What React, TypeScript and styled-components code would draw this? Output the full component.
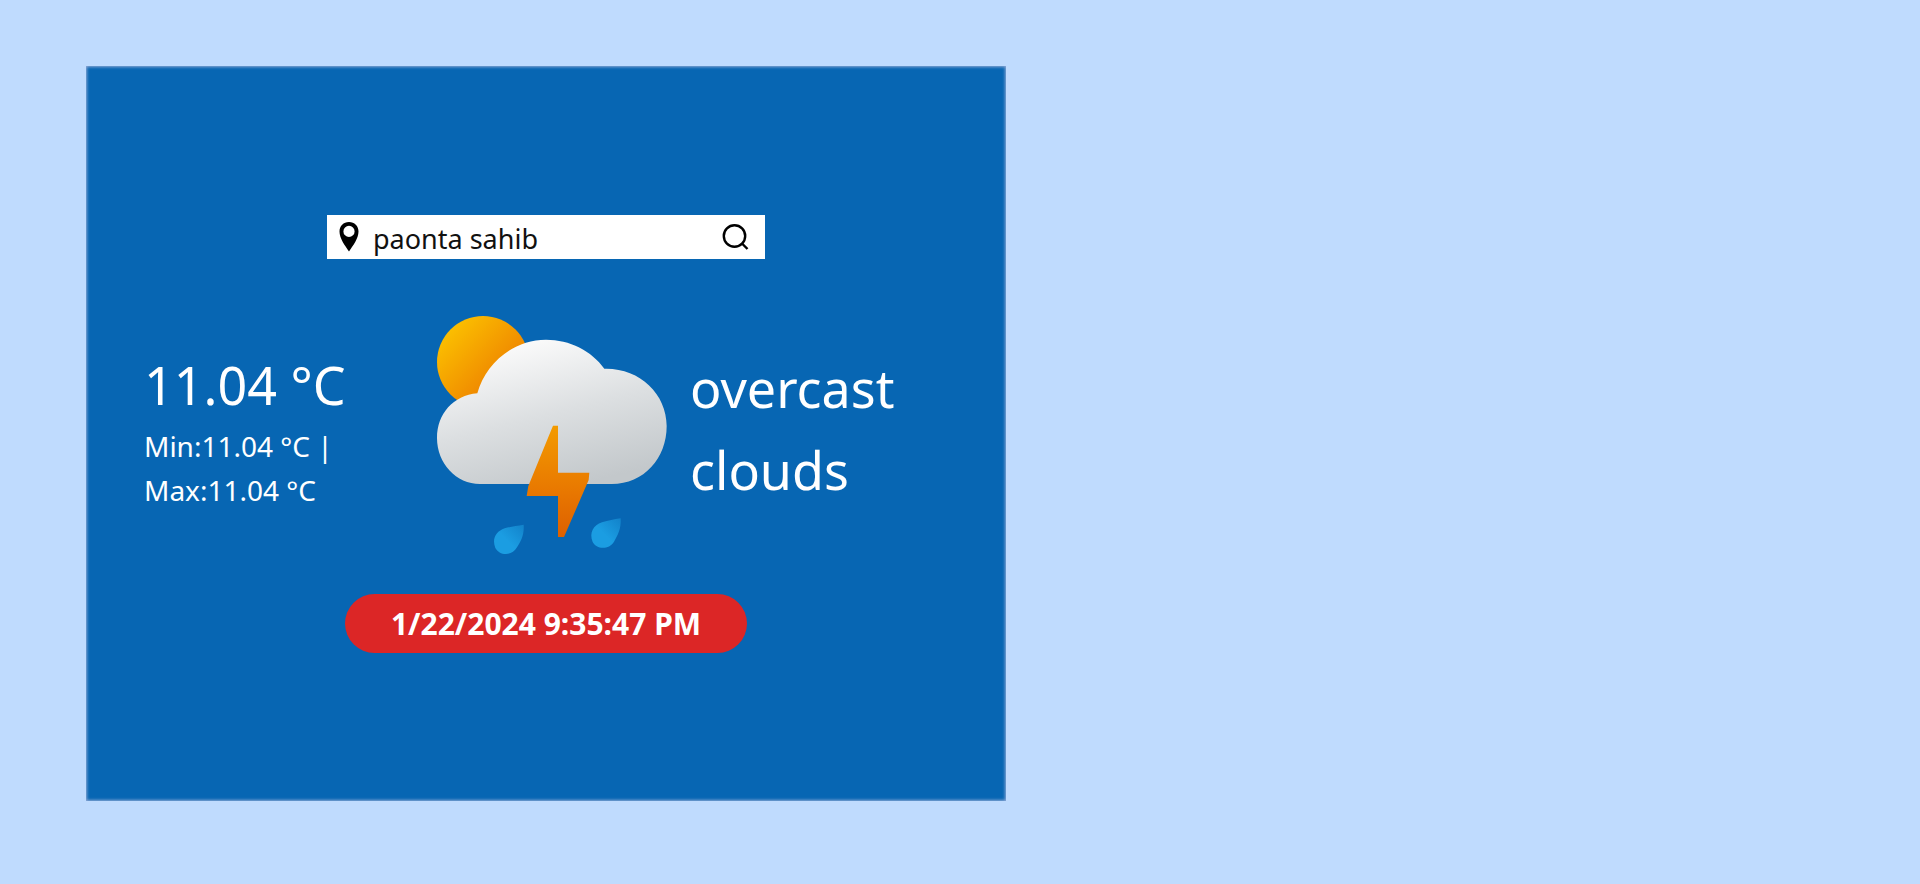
import React, { useState } from "react";
import styled, { createGlobalStyle } from "styled-components";

const GlobalStyle = createGlobalStyle`
  * { box-sizing: border-box; }
  body {
    margin: 0;
    min-height: 100vh;
    background: #bfdbfe;
    color: #fff;
    font-family: "Segoe UI", "Noto Sans", sans-serif;
  }
`;

const Page = styled.div`
  padding: 66px 86px;
`;

const Card = styled.main`
  display: flex;
  flex-direction: column;
  align-items: center;
  width: 100%;
  max-width: 920px;
  padding: 149px 58px 148px;
  background: #0766b3;
  box-shadow: inset 0 0 3px 1px #8fa9d6;
`;

const SearchBar = styled.form`
  display: flex;
  align-items: center;
  width: 438px;
  max-width: 100%;
  height: 44px;
  padding: 0 12px;
  background: #fff;
  color: #000;
`;

const SearchInput = styled.input`
  flex: 1;
  min-width: 0;
  height: 44px;
  margin-left: 14px;
  padding: 2px 0 0;
  border: 0;
  outline: 0;
  background: transparent;
  color: #111;
  font: inherit;
  font-size: 27px;
`;

const SearchButton = styled.button`
  display: flex;
  padding: 0;
  border: 0;
  background: transparent;
  color: inherit;
  cursor: pointer;
`;

const Weather = styled.section`
  display: grid;
  grid-template-columns: 276px 270px 1fr;
  align-items: center;
  width: 100%;
  padding: 41px 0 24px;
`;

const Readings = styled.div`
  max-width: 220px;
  padding-bottom: 12px;
`;

const Temperature = styled.p`
  margin: 0;
  font-size: 52px;
  line-height: 78px;
  white-space: nowrap;
`;

const Range = styled.p`
  margin: 0;
  font-size: 28px;
  line-height: 44px;
`;

const Condition = styled.p`
  margin: 0;
  max-width: 220px;
  padding-bottom: 12px;
  font-size: 52px;
  line-height: 82px;
`;

const TimeBadge = styled.time`
  padding: 1px 46px 0;
  border-radius: 30px;
  background: #dc2626;
  font-size: 30px;
  font-weight: 700;
  line-height: 58px;
`;

const PinIcon = () => (
  <svg width="20" height="30" viewBox="0 0 20 30" aria-hidden="true">
    <path
      fillRule="evenodd"
      fill="currentColor"
      d="M10 0C4.500 0 .5 4 .5 9.500c0 7 5.500 14 9.500 20 4-6 9.500-13 9.500-20C19.500 4 15.500 0 10 0Zm0 3.800a5.600 5.600 0 1 1 0 11.200 5.600 5.600 0 0 1 0-11.200Z"
    />
  </svg>
);

const SearchIcon = () => (
  <svg width="34" height="34" viewBox="0 0 34 34" fill="none" stroke="currentColor" strokeWidth="2.400" aria-hidden="true">
    <circle cx="15.500" cy="16" r="10.700" />
    <path d="M22.500 23 28.500 29" />
  </svg>
);

const StormIcon = () => (
  <svg width="270" height="270" viewBox="0 0 810 810" role="img" aria-label="Thunderstorm">
    <defs>
      <linearGradient id="sun" gradientUnits="userSpaceOnUse" x1="90" y1="95" x2="245" y2="245">
        <stop offset="0" stopColor="#fbbd00" />
        <stop offset="1" stopColor="#ee8300" />
      </linearGradient>
      <linearGradient id="cloud" gradientUnits="userSpaceOnUse" x1="340" y1="120" x2="450" y2="560">
        <stop offset="0" stopColor="#fafafa" />
        <stop offset="0.500" stopColor="#dcdfe1" />
        <stop offset="1" stopColor="#c3c8cb" />
      </linearGradient>
      <linearGradient id="bolt" x1="0" y1="0" x2="0" y2="1">
        <stop offset="0" stopColor="#f39b00" />
        <stop offset="0.600" stopColor="#e87700" />
        <stop offset="1" stopColor="#dd6000" />
      </linearGradient>
      <linearGradient id="drop" x1="0" y1="1" x2="1" y2="0">
        <stop offset="0.450" stopColor="#1b9de2" />
        <stop offset="1" stopColor="#1282ca" />
      </linearGradient>
    </defs>
    <circle cx="189" cy="186" r="138" fill="url(#sun)" />
    <path
      fill="url(#cloud)"
      d="M180 552C109 552 51 491 51 414C51 342 100 286 172 280C197 190 280 119 378 119C449 119 515 152 553 206C657 203 740 280 740 378C740 475 672 552 575 552Z"
    />
    <path fill="url(#bolt)" d="M399 377H414V518H508L506 540L432 711H414V588H320L325 558L394 389Z" />
    <g fill="url(#drop)">
      <path d="M311 674C313 706 302 724 291 742C275 770 238 767 226 744C215 716 228 694 254 685C274 680 290 677 311 674Z" />
      <path d="M602 655C604 687 593 706 582 725C566 751 529 748 518 726C507 698 520 676 546 667C566 662 581 658 602 655Z" />
    </g>
  </svg>
);

export default function App() {
  const [city, setCity] = useState("paonta sahib");
  return (
    <>
      <GlobalStyle />
      <Page>
        <Card>
          <SearchBar role="search" onSubmit={(event) => event.preventDefault()}>
            <PinIcon />
            <SearchInput aria-label="City" value={city} onChange={(event) => setCity(event.target.value)} />
            <SearchButton type="submit" aria-label="Search">
              <SearchIcon />
            </SearchButton>
          </SearchBar>
          <Weather>
            <Readings>
              <Temperature>11.04 °C</Temperature>
              <Range>Min:11.04 °C | Max:11.04 °C</Range>
            </Readings>
            <StormIcon />
            <Condition>overcast clouds</Condition>
          </Weather>
          <TimeBadge dateTime="2024-01-22T21:35:47">1/22/2024 9:35:47 PM</TimeBadge>
        </Card>
      </Page>
    </>
  );
}
